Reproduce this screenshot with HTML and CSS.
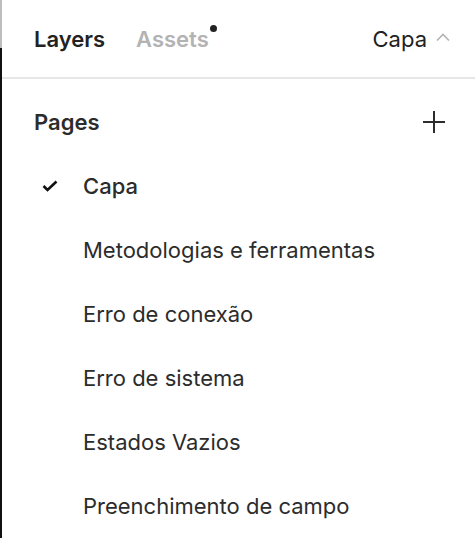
FILE: index.html
```html
<!DOCTYPE html>
<html>
<head>
<meta charset="utf-8">
<link rel="stylesheet" href="styles.css">
</head>
<body>
<div class="panel">
  <div class="tabs">
    <div class="tab active">Layers</div>
    <div class="tab muted">Assets<span class="dot"></span></div>
    <div class="page-switch">Capa
      <svg class="chev" width="14" height="9" viewBox="0 0 14 9"><path d="M1 7.5 L7 1.5 L13 7.5" fill="none" stroke="#b3b3b3" stroke-width="1.6"/></svg>
    </div>
  </div>
  <div class="pages-head">
    <div class="pages-title">Pages</div>
    <svg class="plus" width="22" height="22" viewBox="0 0 22 22"><path d="M11 0 V22 M0 11 H22" stroke="#2c2c2c" stroke-width="2"/></svg>
  </div>
  <ul class="pages">
    <li class="page current"><svg class="check" width="16" height="12" viewBox="0 0 16 12"><path d="M1.5 6 L5.5 10 L14.5 1.5" fill="none" stroke="#111" stroke-width="2.6"/></svg><span>Capa</span></li>
    <li class="page"><span>Metodologias e ferramentas</span></li>
    <li class="page"><span>Erro de conexão</span></li>
    <li class="page"><span>Erro de sistema</span></li>
    <li class="page"><span>Estados Vazios</span></li>
    <li class="page"><span>Preenchimento de campo</span></li>
  </ul>
</div>
</body>
</html>
```
FILE: styles.css
```css
html, body {
  margin: 0;
  padding: 0;
  background: #fff;
  height: 100%;
  overflow: hidden;
}
body {
  font-family: Inter, "Noto Sans", sans-serif;
  color: #2c2c2c;
}
.panel {
  height: 538px;
  border-left: 2px solid #111;
  position: relative;
  box-sizing: border-box;
}
.panel::before {
  content: "";
  position: absolute;
  left: -2px;
  top: 0;
  width: 2px;
  height: 48px;
  background: #bdbdbd;
}
.tabs {
  display: flex;
  align-items: center;
  height: 79px;
  border-bottom: 2px solid #e6e6e6;
  padding: 0 25px 0 32px;
  box-sizing: border-box;
}
.tab {
  font-size: 22px;
  font-weight: 600;
  margin-right: 31px;
  position: relative;
  line-height: 26px;
}
.tab.active { color: #222; }
.tab.muted { color: #b3b3b3; }
.dot {
  position: absolute;
  right: -8px;
  top: -1px;
  width: 7px;
  height: 7px;
  border-radius: 50%;
  background: #222;
}
.page-switch {
  margin-left: auto;
  display: flex;
  align-items: center;
  gap: 9px;
  font-size: 22px;
  color: #222;
}
.chev { margin-top: -3px; }
.pages-head {
  display: flex;
  align-items: center;
  justify-content: space-between;
  padding: 11px 30px 0 32px;
  height: 64px;
}
.pages-title {
  font-size: 22px;
  font-weight: 600;
  color: #2c2c2c;
}
.pages {
  list-style: none;
  margin: 0;
  padding: 0;
}
.page {
  height: 64px;
  display: flex;
  align-items: center;
  padding-left: 81px;
  position: relative;
  font-size: 22px;
  color: #2c2c2c;
}
.page.current { font-weight: 500; }
.check {
  position: absolute;
  left: 40px;
  top: 26px;
}
```
